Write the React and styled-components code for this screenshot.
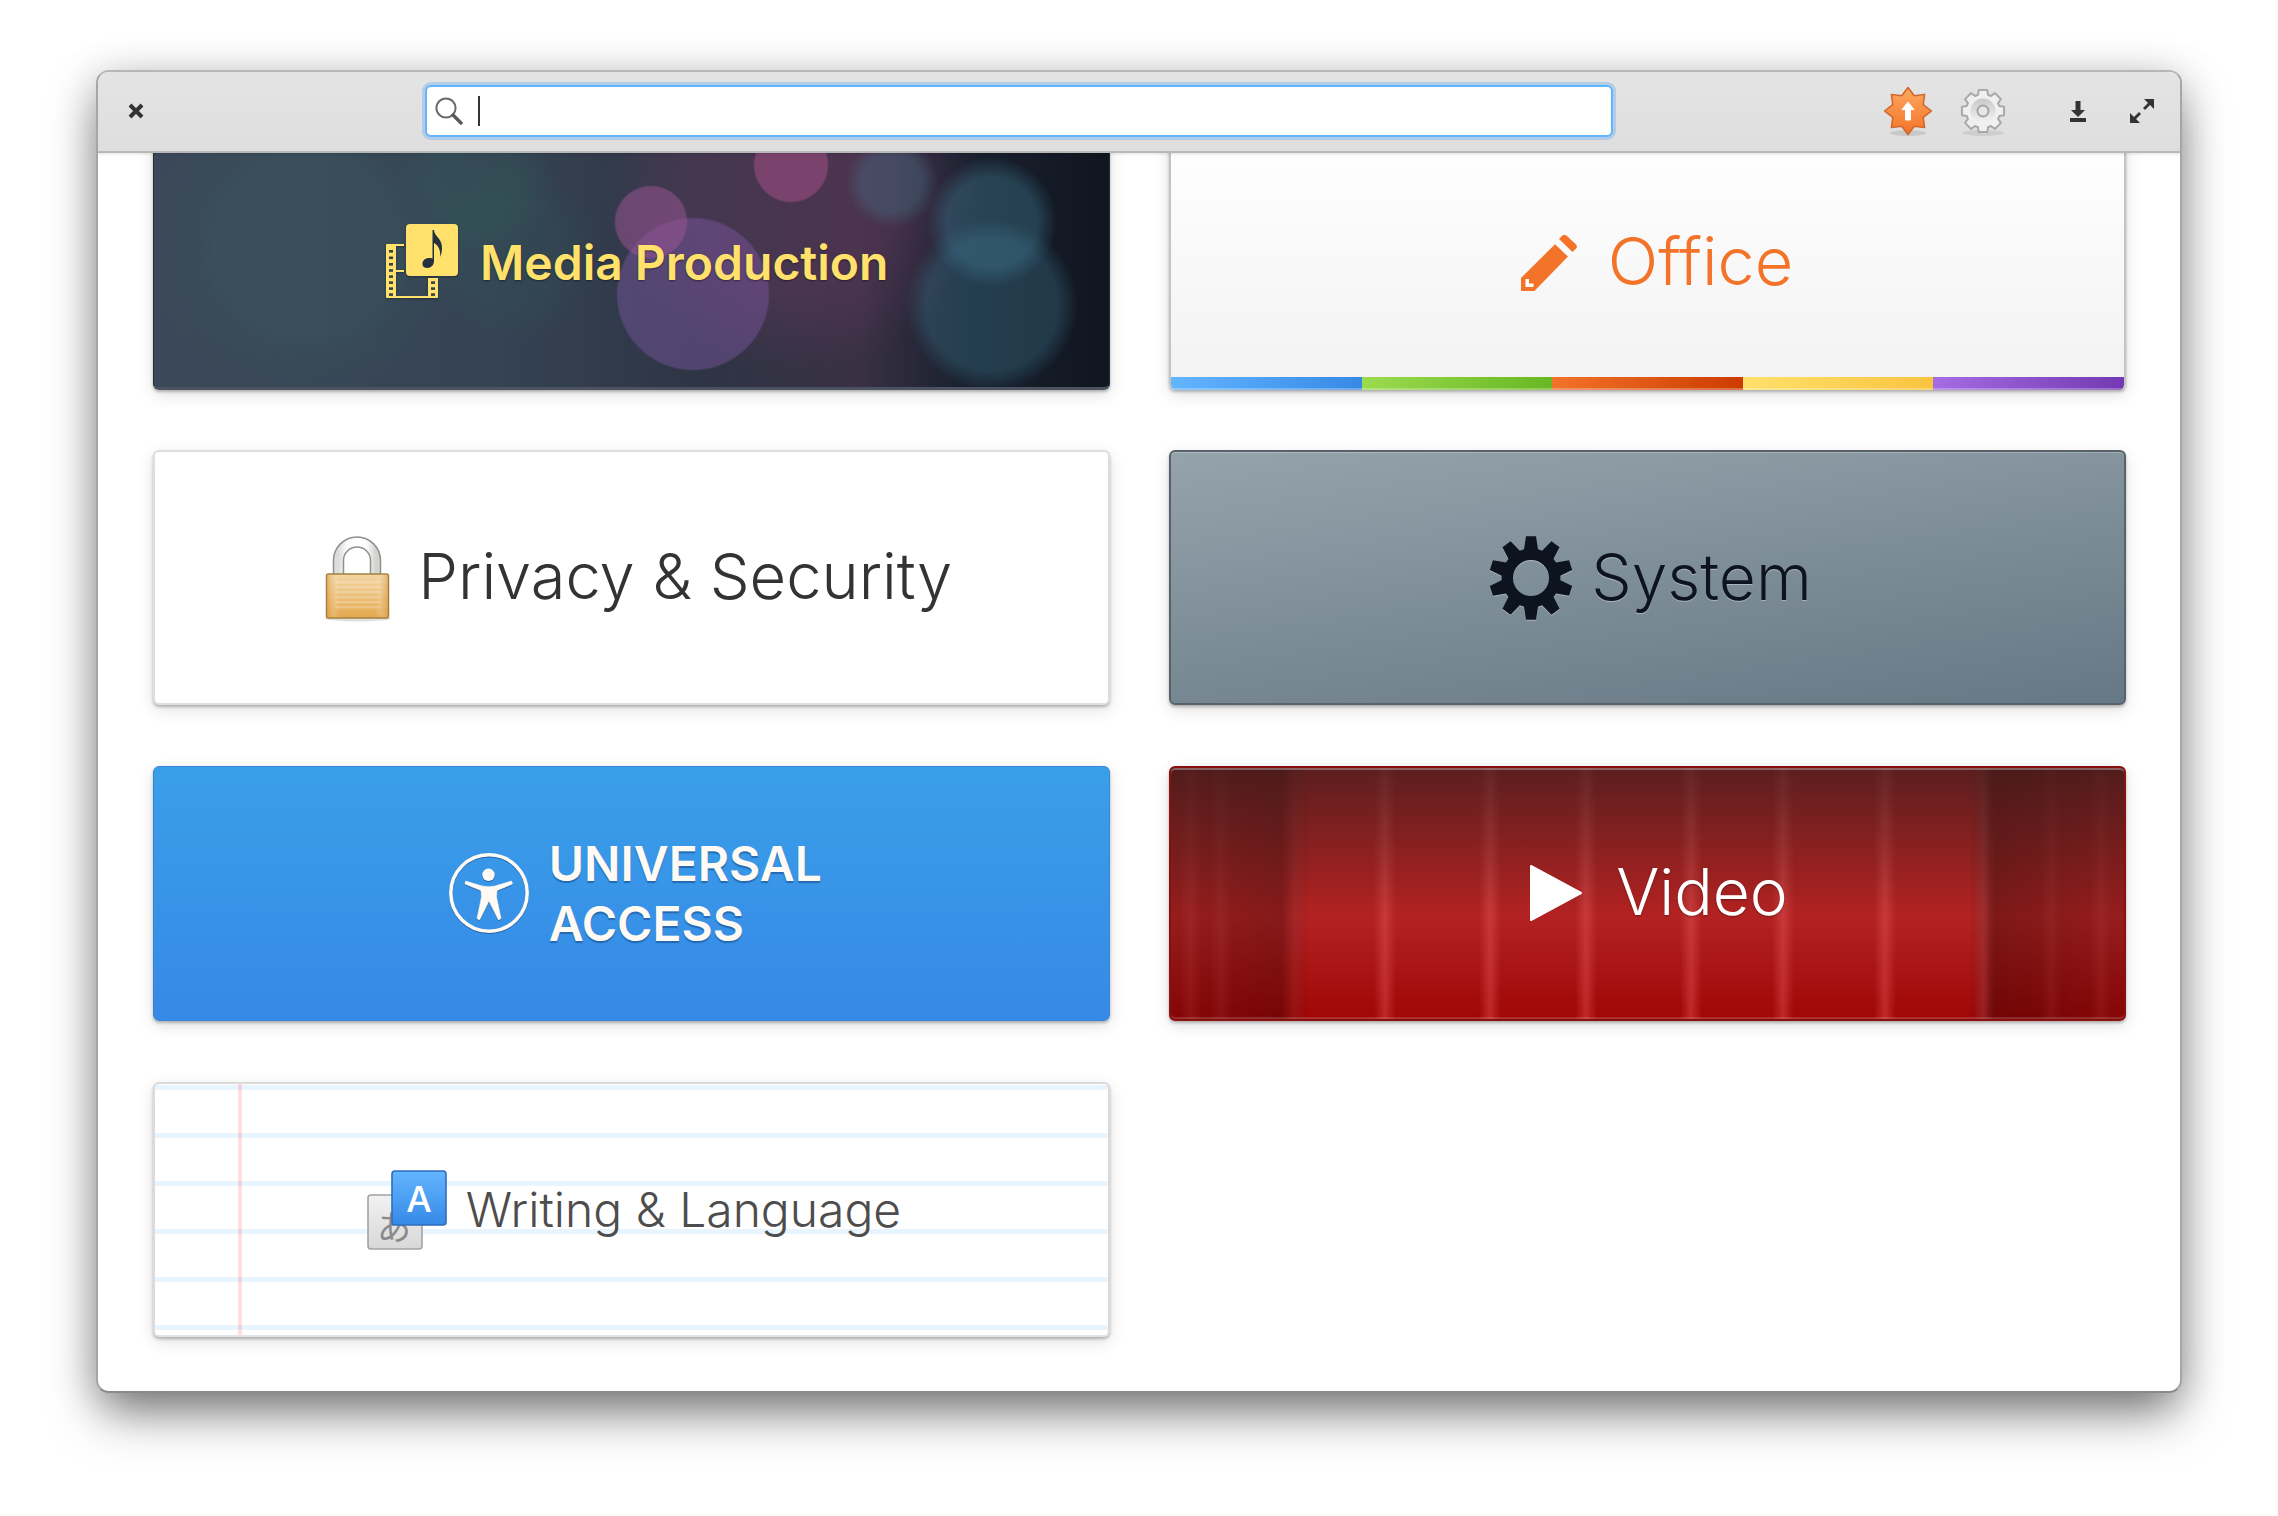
import React from "react";
import styled, { createGlobalStyle } from "styled-components";

const Global = createGlobalStyle`
  html, body { margin: 0; padding: 0; background: #fff; }
  #root { height: 1516px; overflow: hidden; }
`;

const bokeh = (x, y, r, color, soft = 2) =>
  `radial-gradient(circle at ${x}px ${y}px, ${color} ${r - soft}px, transparent ${r + soft}px)`;
const halo = (x, y, r, color) =>
  `radial-gradient(circle at ${x}px ${y}px, ${color} 0, ${color} ${Math.round(r * 0.55)}px, transparent ${r}px)`;

const mediaLayers = [
  bokeh(497, 86, 36, "rgba(160,85,150,.5)", 1),
  bokeh(637, 29, 37, "rgba(170,80,140,.5)", 1),
  bokeh(539, 158, 76, "rgba(130,90,170,.42)", 1),
  bokeh(738, 46, 38, "rgba(70,130,150,.3)", 8),
  bokeh(838, 86, 55, "rgba(70,135,160,.34)", 10),
  bokeh(838, 169, 76, "rgba(65,130,155,.3)", 10),
  bokeh(153, 109, 100, "rgba(60,115,105,.1)", 10),
  halo(153, 109, 165, "rgba(55,100,95,.16)"),
  halo(321, 43, 80, "rgba(45,110,90,.18)"),
  halo(359, 116, 90, "rgba(45,100,90,.16)"),
  halo(640, 50, 190, "rgba(120,60,105,.3)"),
  "linear-gradient(to right, #3b4859 0, #354354 35%, #2e3444 58%, #393044 74%, #1a2230 84%, #10151f 100%)",
].join(", ");

const streakAt = (p, a = 0.3, w = 11) =>
  `linear-gradient(to right, transparent ${p - w}px, rgba(255,110,110,${a}) ${p}px, transparent ${p + w}px)`;

const curtainLayers = [
  "linear-gradient(to bottom, rgba(48,28,28,.68) 0, rgba(48,28,28,.36) 30%, rgba(48,28,28,.04) 58%, transparent 100%)",
  "linear-gradient(to right, rgba(0,0,0,.16) 0, rgba(0,0,0,.26) 11.5%, transparent 14.5%, transparent 83.8%, rgba(0,0,0,.3) 86%, rgba(0,0,0,.16) 100%)",
  ...[214, 319, 415, 520, 612, 714, 813].map((p) => streakAt(p, 0.32)),
  ...[20, 50, 123, 880, 930].map((p) => streakAt(p, 0.14)),
  "linear-gradient(to bottom, #b82222 0, #b82222 60%, #a00606 100%)",
].join(", ");

const gearPath = (cx, cy, n, ro, ri, wo, wr) => {
  const pts = [];
  for (let i = 0; i < n; i += 1) {
    const a = -Math.PI / 2 + (i * 2 * Math.PI) / n;
    [[ri, -wr], [ro, -wo], [ro, wo], [ri, wr]].forEach(([r, d]) => {
      pts.push(`${(cx + r * Math.cos(a + d)).toFixed(2)} ${(cy + r * Math.sin(a + d)).toFixed(2)}`);
    });
  }
  return `M${pts.join(" L")} Z`;
};

const starPath = (cx, cy, n, ro, ri) => {
  const pts = [];
  for (let i = 0; i < n * 2; i += 1) {
    const a = -Math.PI / 2 + (i * Math.PI) / n;
    const r = i % 2 ? ri : ro;
    pts.push(`${(cx + r * Math.cos(a)).toFixed(2)} ${(cy + r * Math.sin(a)).toFixed(2)}`);
  }
  return `M${pts.join(" L")} Z`;
};

const Page = styled.div`
  height: 1516px;
  padding-top: 70px;
  box-sizing: border-box;
  background: #fff;
  font-family: Inter, "Noto Sans", sans-serif;
`;

const Window = styled.div`
  box-sizing: border-box;
  width: 2086px;
  height: 1323px;
  margin: 0 auto;
  display: flex;
  flex-direction: column;
  border: 2px solid #a6a6a6;
  border-top-color: #b6b6b6;
  border-bottom-color: #8a8a8a;
  border-radius: 13px;
  background: #fff;
  overflow: hidden;
  box-shadow: 0 24px 50px -6px rgba(0, 0, 0, 0.5), 0 4px 40px rgba(0, 0, 0, 0.18);
`;

const Toolbar = styled.header`
  box-sizing: border-box;
  flex: none;
  height: 81px;
  display: flex;
  align-items: center;
  padding: 0 26.5px 1px 30px;
  background: linear-gradient(to bottom, #e4e4e4, #dedede);
  border-bottom: 2px solid #b9b9b9;
  position: relative;
  z-index: 2;
  box-shadow: 0 1px 3px rgba(0, 0, 0, 0.12);
`;

const IconSlot = styled.span`
  display: flex;
  flex: none;
  margin-left: ${(p) => p.$before || 0}px;
`;

const Search = styled.div`
  box-sizing: border-box;
  flex: none;
  width: 1188px;
  height: 52px;
  margin-left: 281px;
  margin-right: auto;
  display: flex;
  align-items: center;
  gap: 15px;
  padding-left: 8px;
  background: #fff;
  border: 2px solid #64b5ff;
  border-radius: 6px;
  box-shadow: 0 0 0 3px rgba(100, 170, 240, 0.38);
`;

const Caret = styled.span`
  flex: none;
  width: 2px;
  height: 30px;
  background: #333;
`;

const Content = styled.main`
  flex: 1;
  min-height: 0;
  display: flex;
  flex-direction: column;
  justify-content: flex-end;
  padding: 0 0 54.5px 55px;
  overflow: hidden;
`;

const Grid = styled.div`
  flex: none;
  display: grid;
  grid-template-columns: 957px 957px;
  grid-auto-rows: 255px;
  column-gap: 59px;
  row-gap: 60.6px;
`;

const Card = styled.a`
  box-sizing: border-box;
  position: relative;
  display: flex;
  align-items: center;
  justify-content: center;
  gap: ${(p) => p.$gap}px;
  padding-left: ${(p) => p.$shift || 0}px;
  border-radius: 6px;
  box-shadow: 0 2px 3px rgba(0, 0, 0, 0.25), 0 5px 16px rgba(0, 0, 0, 0.12);
  overflow: hidden;
`;

const Label = styled.span`
  font-size: ${(p) => p.$size}px;
  font-weight: ${(p) => p.$weight || 300};
  color: ${(p) => p.$color};
  text-shadow: ${(p) => p.$shadow || "none"};
  line-height: 1;
  margin-top: ${(p) => p.$drop || 0}px;
  margin-bottom: ${(p) => p.$lift || 0}px;
  white-space: nowrap;
`;

const AccessLabel = styled.span`
  font-size: 48px;
  font-weight: 600;
  line-height: 60px;
  margin-top: 1px;
  color: #fffaf3;
  text-shadow: 0 2px 1px rgba(20, 70, 130, 0.55);
`;

const MediaCard = styled(Card)`
  background: ${mediaLayers};
  border: 1px solid #252b36;
  border-bottom: 3px solid #4c525f;
`;

const OfficeCard = styled(Card)`
  background: linear-gradient(to bottom, #fff, #f2f2f2);
  border: 2px solid #c4c4c4;
  border-bottom: none;
`;

const StripeRow = styled.div`
  position: absolute;
  left: 0;
  right: 0;
  bottom: 0;
  height: 13px;
  display: grid;
  grid-template-columns: repeat(5, 1fr);
  &::after {
    content: "";
    position: absolute;
    left: 0;
    right: 0;
    bottom: 0;
    height: 2px;
    background: rgba(255, 255, 255, 0.28);
  }
`;

const Stripe = styled.span`
  background: linear-gradient(to right, ${(p) => p.$from}, ${(p) => p.$to});
`;

const PrivacyCard = styled(Card)`
  background: #fff;
  border: 2px solid #dedede;
`;

const SystemCard = styled(Card)`
  background: linear-gradient(172deg, #95a3ab, #667885);
  border: 2px solid #57626b;
  box-shadow: inset 0 1px 0 rgba(255, 255, 255, 0.25), 0 2px 3px rgba(0, 0, 0, 0.25), 0 5px 16px rgba(0, 0, 0, 0.12);
`;

const AccessCard = styled(Card)`
  background: linear-gradient(to bottom, #3a9fe9, #3689e6);
  border: 1px solid #3a86d6;
`;

const VideoCard = styled(Card)`
  background: ${curtainLayers};
  border: 2px solid #8a1010;
  box-shadow: inset 0 2px 0 rgba(255, 255, 255, 0.3), inset 0 -2px 0 rgba(255, 255, 255, 0.16),
    0 2px 3px rgba(0, 0, 0, 0.25), 0 5px 16px rgba(0, 0, 0, 0.12);
`;

const WritingCard = styled(Card)`
  background:
    linear-gradient(to right, transparent 83px, rgba(255, 60, 60, 0.17) 83px, rgba(255, 60, 60, 0.17) 87px, transparent 87px),
    repeating-linear-gradient(to bottom, #e8f5ff 0, #e8f5ff 5px, #fff 5px, #fff 48px) 0 1px,
    #fff;
  border: 2px solid #dbdbdb;
  border-bottom-color: #e4e4e4;
`;

const CloseIcon = () => (
  <svg width="16" height="16" viewBox="0 0 16 16">
    <path d="M2 2 L14 14 M14 2 L2 14" stroke="#333" strokeWidth="4" fill="none" />
  </svg>
);

const SearchIcon = () => (
  <svg width="28" height="28" viewBox="0 0 28 28">
    <circle cx="11" cy="11" r="9.6" fill="none" stroke="#6a6a6a" strokeWidth="2" />
    <path d="M18 18 L26 26" stroke="#5a5a5a" strokeWidth="3.4" strokeLinecap="round" />
  </svg>
);

const UpdateIcon = () => (
  <svg width="48" height="50" viewBox="0 -1 48 50">
    <defs>
      <linearGradient id="updateFill" x1="0" y1="0" x2="0" y2="1">
        <stop offset="0" stopColor="#ffa85f" />
        <stop offset="1" stopColor="#f37329" />
      </linearGradient>
    </defs>
    <ellipse cx="24" cy="46" rx="18" ry="3" fill="rgba(0,0,0,.1)" />
    <path d={starPath(24, 24, 8, 23.5, 16.5)} fill="url(#updateFill)" stroke="#d0642c" strokeWidth="1.5" strokeLinejoin="round" />
    <path d="M24 15 L30 22.5 H26.5 V33 H21.5 V22.5 H18 Z" fill="#fff" strokeLinejoin="round" stroke="#fff" strokeWidth="1" />
  </svg>
);

const SettingsIcon = () => (
  <svg width="46" height="50" viewBox="0 -2 46 50">
    <defs>
      <linearGradient id="settingsRing" x1="0" y1="0" x2="0" y2="1">
        <stop offset="0" stopColor="#c8c8c8" />
        <stop offset="1" stopColor="#f4f4f4" />
      </linearGradient>
    </defs>
    <ellipse cx="23" cy="45" rx="21" ry="3" fill="rgba(0,0,0,.08)" />
    <path d={gearPath(23, 23, 8, 21.5, 17, 0.2, 0.3)} fill="#f0f0f0" stroke="#a9a9a9" strokeWidth="2" strokeLinejoin="round" />
    <circle cx="23" cy="23" r="12.5" fill="url(#settingsRing)" />
    <circle cx="23" cy="23" r="5.5" fill="#e6e6e6" stroke="#a4a4a4" strokeWidth="2" />
  </svg>
);

const DownloadIcon = () => (
  <svg width="16" height="21" viewBox="0 0 16 21">
    <path d="M5.5 0 H10.5 V9 H15 L8 16 L1 9 H5.5 Z" fill="#333" />
    <rect y="17" width="16" height="4" fill="#333" />
  </svg>
);

const ExpandIcon = () => (
  <svg width="24" height="24" viewBox="0 0 24 24">
    <path d="M24 0 V10 L20 6 L15 11 L13 9 L18 4 L14 0 Z M0 24 V14 L4 18 L9 13 L11 15 L6 20 L10 24 Z" fill="#333" />
  </svg>
);

const MediaIcon = () => {
  const holesA = [26, 32.5, 39, 45.2, 51.3, 57.3, 63.3, 69.3];
  const holesB = [57.3, 63.3, 69.3];
  return (
    <svg width="72" height="74" viewBox="0 0 72 74" style={{ filter: "drop-shadow(0 1px 1px rgba(0,0,0,.35))" }}>
      <path d="M1 20 H18 V22 H10 V46 H18 V48 H10 V72 H42 V54 H52 V73 A1 1 0 0 1 51 74 H1 A1 1 0 0 1 0 73 V21 A1 1 0 0 1 1 20 Z" fill="#ffe16b" />
      {holesA.map((y) => (
        <rect key={y} x="3" y={y} width="4" height="2.6" fill="#33414f" />
      ))}
      {holesB.map((y) => (
        <rect key={y} x="45" y={y} width="4" height="2.6" fill="#33414f" />
      ))}
      <rect x="20" width="52" height="52" rx="4" fill="#ffe16b" />
      <path
        d="M46.5 6 L48 6 C48 12 56 14 56 24 C56 28 55 31 54 33 C55 26 52 21 48 19 L48 37 C48 41 45 44 41.5 44 C38 44 36 42 36.5 39 C37 35 42 33 46.5 34.5 Z"
        fill="#26303e"
      />
    </svg>
  );
};

const PencilIcon = () => (
  <svg width="56" height="56" viewBox="0 0 56 56">
    <path d="M0 43 L34 9.3 L47 21.6 L13.4 56 H0 Z" fill="#f37329" />
    <path d="M38 4 L42 0 Q44.5 -0.5 46 1 L55 9.5 Q56.5 11.5 55.5 13 L51.5 17 Z" fill="#f37329" />
    <path d="M4.5 44 V52 H12.5 V48.5 H8 V44 Z" fill="#fff" />
  </svg>
);

const LockIcon = () => (
  <svg width="66" height="90" viewBox="0 -4 66 90">
    <defs>
      <linearGradient id="lockBody" x1="0" y1="0" x2="0" y2="1">
        <stop offset="0" stopColor="#f3d6a3" />
        <stop offset="1" stopColor="#e4a84e" />
      </linearGradient>
      <linearGradient id="lockSide" x1="0" y1="0" x2="1" y2="0">
        <stop offset="0" stopColor="#d8963a" stopOpacity=".55" />
        <stop offset=".2" stopColor="#fff" stopOpacity="0" />
        <stop offset=".8" stopColor="#fff" stopOpacity="0" />
        <stop offset="1" stopColor="#d8963a" stopOpacity=".55" />
      </linearGradient>
      <linearGradient id="lockMetal" x1="0" y1="0" x2="1" y2="0">
        <stop offset="0" stopColor="#dcdedb" />
        <stop offset=".25" stopColor="#fdfdfd" />
        <stop offset=".75" stopColor="#fdfdfd" />
        <stop offset="1" stopColor="#d2d4d0" />
      </linearGradient>
    </defs>
    <ellipse cx="33" cy="81.5" rx="33" ry="3" fill="rgba(0,0,0,.12)" />
    <path d="M13.5 38 V23.5 A18.5 18.5 0 0 1 50.5 23.5 V38" fill="none" stroke="#8f918d" strokeWidth="11.5" />
    <path d="M13.5 38 V23.5 A18.5 18.5 0 0 1 50.5 23.5 V38" fill="none" stroke="url(#lockMetal)" strokeWidth="8.5" />
    <rect x="1.5" y="37" width="62" height="44" rx="2" fill="url(#lockBody)" stroke="#a3803f" strokeWidth="1.5" />
    {[44, 49, 54, 59, 64, 69].map((y) => (
      <rect key={y} x="10" y={y} width="46" height="2.4" fill="rgba(255,255,255,.22)" />
    ))}
    <rect x="2.3" y="37.8" width="60.4" height="42.4" fill="url(#lockSide)" />
  </svg>
);

const SystemGear = () => (
  <svg width="84" height="86" viewBox="0 0 84 86" style={{ filter: "drop-shadow(0 1px 0 rgba(255,255,255,.35))" }}>
    <path
      fillRule="evenodd"
      d={`${gearPath(42, 43, 10, 42, 29.5, 0.12, 0.24)} M60 43 A18 18 0 1 0 24 43 A18 18 0 1 0 60 43 Z`}
      fill="#0e141f"
    />
  </svg>
);

const AccessIcon = () => (
  <svg width="80" height="80" viewBox="0 0 80 80" style={{ filter: "drop-shadow(0 1px 0 rgba(20,70,130,.6))" }}>
    <circle cx="40" cy="40" r="38.2" fill="none" stroke="#fffaf3" strokeWidth="3.5" />
    <circle cx="39.5" cy="21.8" r="6.2" fill="#fffaf3" />
    <path
      d="M16.5 28 L33 33 Q40 34.5 46 33 L62.5 28 L63.5 31 L48 37.5 L47.5 44 L52 65.5 L49.5 67 L40 48 L30.5 67 L28 65.5 L32.5 44 L32 37.5 L16 31 Z"
      fill="#fffaf3"
      stroke="#fffaf3"
      strokeWidth=".6"
      strokeLinejoin="round"
    />
  </svg>
);

const PlayIcon = () => (
  <svg width="54" height="58" viewBox="0 0 54 58">
    <path d="M2 2 L52 29 L2 56 Z" fill="#fff" stroke="#fff" strokeWidth="2" strokeLinejoin="round" />
  </svg>
);

const WritingIcon = () => (
  <svg width="80" height="84" viewBox="0 -3 80 84">
    <defs>
      <linearGradient id="grayTile" x1="0" y1="0" x2="0" y2="1">
        <stop offset="0" stopColor="#f2f2f2" />
        <stop offset="1" stopColor="#d8d8d8" />
      </linearGradient>
      <linearGradient id="blueTile" x1="0" y1="0" x2="0" y2="1">
        <stop offset="0" stopColor="#64b5ff" />
        <stop offset="1" stopColor="#3689e6" />
      </linearGradient>
    </defs>
    <rect x="1" y="25" width="54" height="54" rx="3" fill="url(#grayTile)" stroke="#a3a3a3" strokeWidth="1.6" />
    <text x="27" y="70" textAnchor="middle" fontFamily="'Noto Sans CJK JP', sans-serif" fontSize="34" fill="#8a8a8a">あ</text>
    <rect x="25" y="1" width="54" height="54" rx="3" fill="url(#blueTile)" stroke="#2f6cc0" strokeWidth="1.6" />
    <text x="52" y="42" textAnchor="middle" fontFamily="Inter, sans-serif" fontWeight="500" fontSize="36" fill="#fff">A</text>
  </svg>
);

const stripes = [
  ["#64b5ff", "#3689e6"],
  ["#9bdb4d", "#68b723"],
  ["#f37329", "#cc3b02"],
  ["#ffe16b", "#f9c440"],
  ["#a56de2", "#7239b3"],
];

export default function App() {
  return (
    <Page>
      <Global />
      <Window>
        <Toolbar>
          <IconSlot><CloseIcon /></IconSlot>
          <Search>
            <SearchIcon />
            <Caret />
          </Search>
          <IconSlot><UpdateIcon /></IconSlot>
          <IconSlot $before={28}><SettingsIcon /></IconSlot>
          <IconSlot $before={63.5}><DownloadIcon /></IconSlot>
          <IconSlot $before={44}><ExpandIcon /></IconSlot>
        </Toolbar>
        <Content>
          <Grid>
            <MediaCard $gap={22.5} $shift={11}>
              <MediaIcon />
              <Label $size={48} $weight={600} $color="#ffe16b" $shadow="0 1px 2px rgba(0,0,0,.45)" $drop={4}>Media Production</Label>
            </MediaCard>
            <OfficeCard $gap={31} $shift={19}>
              <PencilIcon />
              <Label $size={66.5} $color="#f37329" $lift={3}>Office</Label>
              <StripeRow>
                {stripes.map(([from, to]) => (
                  <Stripe key={from} $from={from} $to={to} />
                ))}
              </StripeRow>
            </OfficeCard>
            <PrivacyCard $gap={27} $shift={14.5}>
              <LockIcon />
              <Label $size={63.2} $color="#333" $lift={2}>Privacy &amp; Security</Label>
            </PrivacyCard>
            <SystemCard $gap={18} $shift={6}>
              <SystemGear />
              <Label $size={64} $color="#0e141f" $shadow="0 1px 0 rgba(255,255,255,.35)" $lift={2}>System</Label>
            </SystemCard>
            <AccessCard $gap={20} $shift={7.5}>
              <AccessIcon />
              <AccessLabel>UNIVERSAL<br />ACCESS</AccessLabel>
            </AccessCard>
            <VideoCard $gap={33} $shift={22}>
              <PlayIcon />
              <Label $size={64} $color="#fff" $shadow="0 1px 2px rgba(0,0,0,.35)" $lift={2}>Video</Label>
            </VideoCard>
            <WritingCard $gap={19} $shift={5}>
              <WritingIcon />
              <Label $size={48} $color="#4d4d4d" $drop={2}>Writing &amp; Language</Label>
            </WritingCard>
          </Grid>
        </Content>
      </Window>
    </Page>
  );
}
